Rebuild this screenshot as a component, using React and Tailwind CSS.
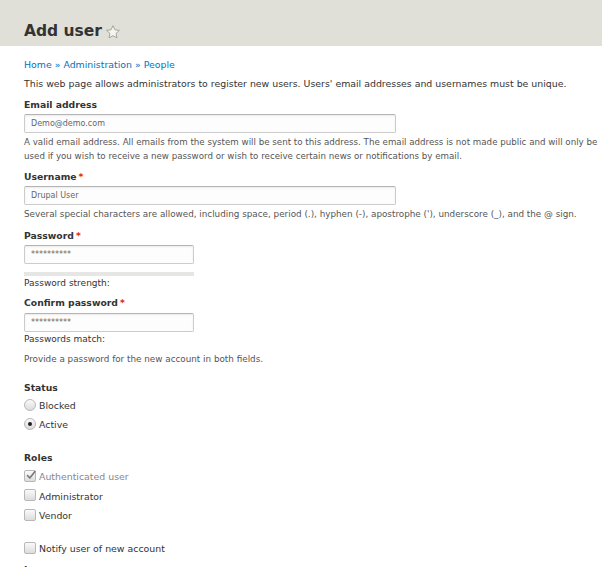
export default function App() {
  return (
    <div className="w-[602px] h-[567px] overflow-hidden bg-white text-[#333] text-[9.4px] leading-[14px]" style={{ fontFamily: '"DejaVu Sans", Verdana, sans-serif' }}>
      {/* Header */}
      <div className="h-[46px] bg-[#e0e0d8] pl-[24px] pt-[20px]">
        <h1 className="flex items-center gap-[3px] text-[15.5px] leading-[22px] font-bold text-[#333]">
          Add user
          <Star />
        </h1>
      </div>

      <div className="pl-[24px]">
        <div className="mt-[12px] text-[#0074bd]">
          <a>Home</a> » <a>Administration</a> » <a>People</a>
        </div>
        <p className="mt-[5px]">
          This web page allows administrators to register new users. Users' email addresses and usernames must be unique.
        </p>

        {/* Email */}
        <Label className="mt-[7px]">Email address</Label>
        <Input className="mt-[2px] w-[372px]" value="Demo@demo.com" />
        <p className="mt-[2px] text-[8.7px] text-[#555] whitespace-nowrap">
          A valid email address. All emails from the system will be sent to this address. The email address is not made public and will only be
          <br />
          used if you wish to receive a new password or wish to receive certain news or notifications by email.
        </p>

        {/* Username */}
        <Label className="mt-[7px]" required>Username</Label>
        <Input className="mt-[2px] w-[372px]" value="Drupal User" />
        <p className="mt-[2px] text-[8.8px] text-[#555]">
          Several special characters are allowed, including space, period (.), hyphen (-), apostrophe ('), underscore (_), and the @ sign.
        </p>

        {/* Password */}
        <Label className="mt-[8px]" required>Password</Label>
        <Input className="mt-[2px] w-[170px]" value="**********" />
        <div className="mt-[8px] w-[170px] h-[4px] bg-[#e6e6e4]" />
        <div className="text-[9px]">Password strength:</div>

        <Label className="mt-[6px]" required>Confirm password</Label>
        <Input className="mt-[3px] w-[170px]" value="**********" />
        <div className="text-[9px]">Passwords match:</div>
        <p className="mt-[6px] text-[8.8px] text-[#555]">Provide a password for the new account in both fields.</p>

        {/* Status */}
        <Label className="mt-[15px]">Status</Label>
        <div className="mt-[4px] flex flex-col gap-[5px]">
          <Option type="radio">Blocked</Option>
          <Option type="radio" checked>Active</Option>
        </div>

        {/* Roles */}
        <Label className="mt-[19px]">Roles</Label>
        <div className="mt-[5px] flex flex-col gap-[5.5px]">
          <Option type="checkbox" checked disabled>Authenticated user</Option>
          <Option type="checkbox">Administrator</Option>
          <Option type="checkbox">Vendor</Option>
        </div>

        <div className="mt-[19px]">
          <Option type="checkbox">Notify user of new account</Option>
        </div>
        <Label className="mt-[7px]">Language</Label>
      </div>
    </div>
  );
}

function Star() {
  return (
    <svg width="16" height="16" viewBox="0 0 24 24" className="mt-[1px]">
      <path
        d="M12 2.5l2.9 6.2 6.7.8-5 4.6 1.3 6.7L12 17.5l-5.9 3.3 1.3-6.7-5-4.6 6.7-.8z"
        fill="#f4f4f0"
        stroke="#9a9a94"
        strokeWidth="1.3"
        strokeLinejoin="round"
      />
    </svg>
  );
}

function Label({ children, required, className = "" }) {
  return (
    <div className={`font-bold text-[9.25px] ${className}`}>
      {children}
      {required && <span className="ml-[2px] text-[#e32700]">*</span>}
    </div>
  );
}

function Input({ value, className = "" }) {
  return (
    <div className={`h-[19px] border border-[#ccc] border-t-[#b4b4b4] rounded-[2px] bg-[#fdfdfd] shadow-[inset_0_1px_2px_rgba(0,0,0,0.08)] px-[6px] flex items-center text-[8px] text-[#666] ${className}`}>
      {value}
    </div>
  );
}

function Option({ type, checked, disabled, children }) {
  return (
    <div className="flex items-center gap-[3px] h-[14px]">
      {type === "radio" ? (
        <span className="relative -mt-[3px] w-[12px] h-[12px] rounded-full border border-[#b8b8b8] bg-gradient-to-b from-[#fafafa] to-[#dcdcdc] flex items-center justify-center">
          {checked && <span className="w-[4px] h-[4px] rounded-full bg-[#222]" />}
        </span>
      ) : (
        <span className="relative -mt-[3px] w-[12px] h-[12px] rounded-[2px] border border-[#b8b8b8] bg-gradient-to-b from-[#fafafa] to-[#dcdcdc]">
          {checked && (
            <svg width="12" height="12" viewBox="0 0 12 12" className="absolute -top-[2px] left-[0px]">
              <path d="M2.5 6.5l2.3 2.5L10 2.5" fill="none" stroke="#777" strokeWidth="1.6" strokeLinecap="round" strokeLinejoin="round" />
            </svg>
          )}
        </span>
      )}
      <span className={disabled ? "text-[#888]" : ""}>{children}</span>
    </div>
  );
}
